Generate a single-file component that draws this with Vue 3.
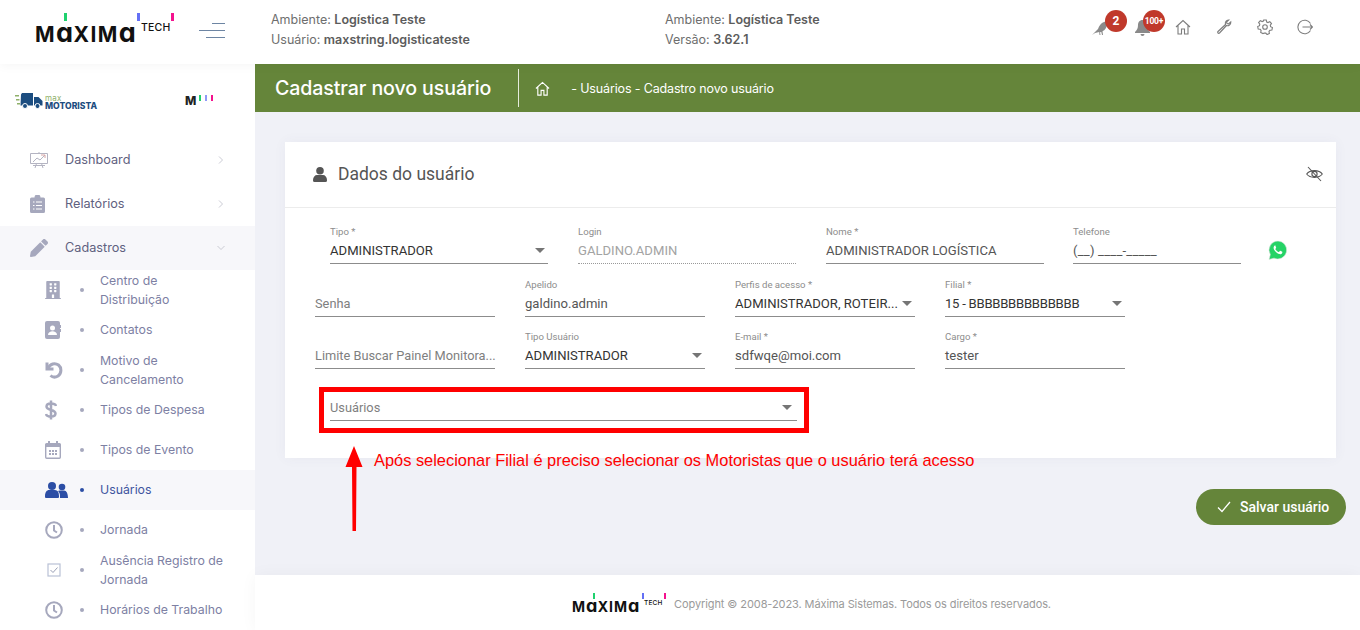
<script setup>
const main = [
  { label: 'Dashboard', icon: 'chart', chev: 'right' },
  { label: 'Relatórios', icon: 'clipboard', chev: 'right' },
  { label: 'Cadastros', icon: 'pencil', chev: 'down', open: true },
]
const subs = [
  { label: 'Centro de Distribuição', icon: 'building' },
  { label: 'Contatos', icon: 'contact' },
  { label: 'Motivo de Cancelamento', icon: 'undo' },
  { label: 'Tipos de Despesa', icon: 'dollar' },
  { label: 'Tipos de Evento', icon: 'calendar' },
  { label: 'Usuários', icon: 'users', active: true },
  { label: 'Jornada', icon: 'clock' },
  { label: 'Ausência Registro de Jornada', icon: 'check' },
  { label: 'Horários de Trabalho', icon: 'clock' },
]
const rows = [
  { cls: 'row-a', fields: [
    { label: 'Tipo *', value: 'ADMINISTRADOR', select: true },
    { label: 'Login', value: 'GALDINO.ADMIN', disabled: true },
    { label: 'Nome *', value: 'ADMINISTRADOR LOGÍSTICA', soft: true },
    { label: 'Telefone', value: '(__) ____-_____', soft: true, cls: 'phone' },
  ] },
  { cls: 'row-b', fields: [
    { value: 'Senha', empty: true },
    { label: 'Apelido', value: 'galdino.admin', soft: true },
    { label: 'Perfis de acesso *', value: 'ADMINISTRADOR, ROTEIR...', select: true },
    { label: 'Filial *', value: '15 - BBBBBBBBBBBBBB', select: true, cls: 'tight' },
  ] },
  { cls: 'row-b', fields: [
    { value: 'Limite Buscar Painel Monitora...', empty: true },
    { label: 'Tipo Usuário', value: 'ADMINISTRADOR', select: true },
    { label: 'E-mail *', value: 'sdfwqe@moi.com', soft: true },
    { label: 'Cargo *', value: 'tester', soft: true },
  ] },
  { cls: 'row-c', fields: [
    { value: 'Usuários', empty: true, select: true },
  ] },
]
</script>

<template>
  <div class="page">
    <header class="header">
      <div class="brand">
        <div class="logo">
          <span class="mark">M<i>a</i>XIM<i>a</i></span><span class="tech">TECH</span>
          <b class="tick green"></b><b class="tick blue"></b><b class="tick pink"></b>
        </div>
        <svg class="burger" width="26" height="15" viewBox="0 0 26 15">
          <path d="M13 .5H26M0 7.500H26M7 14.500H26" stroke="#6d85a3" stroke-width="1" fill="none" />
        </svg>
      </div>
      <div class="info">
        <p>Ambiente: <strong>Logística Teste</strong></p>
        <p>Usuário: <strong>maxstring.logisticateste</strong></p>
      </div>
      <div class="info second">
        <p>Ambiente: <strong>Logística Teste</strong></p>
        <p>Versão: <strong>3.62.1</strong></p>
      </div>
      <div class="tools">
        <span class="tool bird">
          <svg width="17" height="16" viewBox="0 0 17 16">
            <path d="M0 15 6 9c1-3 3-6 6-7 1-.6 2.500-.5 3 .5L17 4l-2 .8c-.5 3-2 5.500-4.500 6.500L11 15h-1l-.7-3-1.300.2L8.500 15h-1l-.3-3L3 13Z" fill="#8a8a8a" />
          </svg>
          <em class="badge">2</em>
        </span>
        <span class="tool bell">
          <svg width="15" height="16" viewBox="0 0 15 16">
            <path d="M7.500 0C4.500 0 3 2.500 3 5c0 3.500-1 5-3 7v1h15v-1c-2-2-3-3.500-3-7 0-2.500-1.500-5-4.500-5ZM5.500 14a2 2 0 0 0 4 0Z" fill="#8a8a8a" />
          </svg>
          <em class="badge small">100+</em>
        </span>
        <svg class="tool-icon" width="16" height="16" viewBox="0 0 16 16" fill="none" stroke="#7d7d7d" stroke-width="1.1">
          <path d="M1 8 8 1.500 15 8M3 6.500V15h3.500v-5h3v5H13V6.500" />
        </svg>
        <svg class="tool-icon" width="16" height="16" viewBox="0 0 16 16" fill="none" stroke="#7d7d7d" stroke-width="1.1">
          <path d="M9.500 5.500 2 12.500c-1 1 .5 2.500 1.500 1.500l7-7.500c2 .7 4.500-1 4.300-3.500L12.500 5 11 4.500l-.5-1.500L12.800 1c-2.500-.3-4 2.300-3.300 4.500Z" />
        </svg>
        <svg class="tool-icon" width="16" height="16" viewBox="0 0 16 16" fill="none" stroke="#7d7d7d" stroke-width="1.1">
          <circle cx="8" cy="8" r="2.300" />
          <path d="M6.700 1h2.600l.4 2 1.300.6 1.800-1 1.700 2-1.200 1.600.3 1.500 1.800.9-.5 2.500-2 .2-.9 1.200.4 2-2.300 1.100-1.300-1.500H7.400L6 14.600l-2.300-1.100.4-2-.9-1.200-2-.2L.7 7.600l1.800-.9.300-1.500L1.600 3.600l1.700-2 1.800 1 1.300-.6Z" />
        </svg>
        <svg class="tool-icon last" width="16" height="16" viewBox="0 0 16 16" fill="none" stroke="#7d7d7d" stroke-width="1.1">
          <path d="M13.500 4.500A6.800 6.800 0 1 0 13.500 11.500M5.500 8H15.500M13 5.500 15.500 8 13 10.500" />
        </svg>
      </div>
    </header>

    <div class="body">
      <aside class="sidebar">
        <div class="products">
          <div class="maxmot">
            <svg width="28" height="16" viewBox="0 0 28 16">
              <path d="M0 2h4v1.500H0zM1 6h3.500v1.500H1zM2 10h3v1.500H2z" fill="#8fb06a" />
              <path d="M6 1.500 7 0h11v12.500H5.500ZM19 4h4.500l4 4v4.500H19Z" fill="#1c4d80" />
              <circle cx="10" cy="13" r="2.500" fill="#1c4d80" stroke="#fff" />
              <circle cx="22.500" cy="13" r="2.500" fill="#1c4d80" stroke="#fff" />
            </svg>
            <div class="maxmot-text"><span>max</span><strong>MOTORISTA</strong></div>
          </div>
          <div class="mini">
            <span>M</span><b class="bar green"></b><b class="bar blue"></b><b class="bar pink"></b>
          </div>
        </div>

        <nav>
          <a v-for="m in main" :key="m.label" class="main-item" :class="{ open: m.open }">
            <span class="main-icon">
              <svg v-if="m.icon === 'chart'" width="18" height="17" viewBox="0 0 18 17" fill="none" stroke="#b4b4c2" stroke-width="1">
                <path d="M.5 1.500h17v10H.5ZM3 10l4-4 3 2 5-5M5 16l1.500-4.500M13 16l-1.500-4.500M9 0v1.500M3 13.500h12" />
                <path d="M11 3h4v3" stroke="#d8a6a6" />
              </svg>
              <svg v-else-if="m.icon === 'clipboard'" width="15" height="18" viewBox="0 0 15 18">
                <path d="M1.500 2.500H4.500a3 3 0 0 1 6 0h3A1.500 1.500 0 0 1 15 4v12.500a1.500 1.500 0 0 1-1.500 1.500H1.500A1.500 1.500 0 0 1 0 16.500V4a1.500 1.500 0 0 1 1.500-1.500Z" fill="#a6a8bd" />
                <path d="M3 7h1.500M6 7h6M3 10.500h1.500M6 10.500h6M3 14h1.500M6 14h6" stroke="#fff" stroke-width="1.200" />
              </svg>
              <svg v-else width="18" height="18" viewBox="0 0 512 512">
                <path d="M497.900 142.100l-46.100 46.100c-4.700 4.700-12.300 4.700-17 0l-111-111c-4.700-4.700-4.700-12.300 0-17l46.100-46.100c18.700-18.700 49.100-18.700 67.900 0l60.100 60.100c18.800 18.700 18.800 49.100 0 67.900zM284.200 99.800L21.600 362.400.4 483.900c-2.900 16.400 11.400 30.600 27.800 27.800l121.500-21.300 262.600-262.600c4.700-4.700 4.700-12.300 0-17l-111-111c-4.800-4.700-12.400-4.700-17.100 0z" fill="#a6a8bd" />
              </svg>
            </span>
            <span class="main-label">{{ m.label }}</span>
            <svg class="chev" width="8" height="8" viewBox="0 0 8 8" fill="none" stroke="#c4c5cf" stroke-width=".9">
              <path v-if="m.chev === 'right'" d="M2 .5 5.500 4 2 7.500" />
              <path v-else d="M.5 2 4 5.500 7.500 2" />
            </svg>
          </a>
          <a v-for="s in subs" :key="s.label" class="sub-item" :class="{ active: s.active }">
            <span class="sub-icon">
              <svg v-if="s.icon === 'building'" width="16" height="18" viewBox="0 0 448 512">
                <path d="M436 480h-20V24c0-13.255-10.745-24-24-24H56C42.745 0 32 10.745 32 24v456H12c-6.627 0-12 5.373-12 12v20h448v-20c0-6.627-5.373-12-12-12zM128 76c0-6.627 5.373-12 12-12h40c6.627 0 12 5.373 12 12v40c0 6.627-5.373 12-12 12h-40c-6.627 0-12-5.373-12-12V76zm0 96c0-6.627 5.373-12 12-12h40c6.627 0 12 5.373 12 12v40c0 6.627-5.373 12-12 12h-40c-6.627 0-12-5.373-12-12v-40zm52 148h-40c-6.627 0-12-5.373-12-12v-40c0-6.627 5.373-12 12-12h40c6.627 0 12 5.373 12 12v40c0 6.627-5.373 12-12 12zm76 160h-64v-84c0-6.627 5.373-12 12-12h40c6.627 0 12 5.373 12 12v84zm64-172c0 6.627-5.373 12-12 12h-40c-6.627 0-12-5.373-12-12v-40c0-6.627 5.373-12 12-12h40c6.627 0 12 5.373 12 12v40zm0-96c0 6.627-5.373 12-12 12h-40c-6.627 0-12-5.373-12-12v-40c0-6.627 5.373-12 12-12h40c6.627 0 12 5.373 12 12v40zm0-96c0 6.627-5.373 12-12 12h-40c-6.627 0-12-5.373-12-12V76c0-6.627 5.373-12 12-12h40c6.627 0 12 5.373 12 12v40z" fill="#a6a8bd" />
              </svg>
              <svg v-else-if="s.icon === 'contact'" width="16" height="18" viewBox="0 0 16 18">
                <rect width="15" height="18" rx="2" fill="#a6a8bd" />
                <path d="M15 4h1v3h-1zM15 8h1v3h-1z" fill="#a6a8bd" />
                <circle cx="7.500" cy="7" r="2.500" fill="#fff" />
                <path d="M3 14c0-5 9-5 9 0Z" fill="#fff" />
              </svg>
              <svg v-else-if="s.icon === 'undo'" width="18" height="18" viewBox="0 0 18 18" fill="none" stroke="#a6a8bd" stroke-width="3">
                <path d="M2 1.500V8h6.500" />
                <path d="M3 7.500C5 2.500 10 1.500 13.500 4c3.500 3 3 8.500-.5 11-2.500 1.500-5.500 1.300-7.500-.5" />
              </svg>
              <svg v-else-if="s.icon === 'dollar'" width="12" height="20" viewBox="0 0 12 20" fill="none" stroke="#a6a8bd" stroke-width="2.500">
                <path d="M11 6C10.500 4 8.500 3.500 6 3.500 3.500 3.500 1.500 4.500 1.500 6.500S3.500 9.300 6 10s4.500 1.500 4.500 3.500S8.500 16.500 6 16.500 1.500 16 1 14M6 .5v19" />
              </svg>
              <svg v-else-if="s.icon === 'calendar'" width="16" height="18" viewBox="0 0 16 18">
                <path d="M3 0h2v2h6V0h2v2h1.500A1.500 1.500 0 0 1 16 3.500V6H0V3.500A1.500 1.500 0 0 1 1.500 2H3Z" fill="#a6a8bd" />
                <path d="M.7 6v10.300a1 1 0 0 0 1 1h12.600a1 1 0 0 0 1-1V6" fill="none" stroke="#a6a8bd" stroke-width="1.400" />
                <path d="M4 9h2v2H4zM7 9h2v2H7zM10 9h2v2h-2zM4 12h2v2H4zM7 12h2v2H7zM10 12h2v2h-2z" fill="#a6a8bd" />
              </svg>
              <svg v-else-if="s.icon === 'users'" width="23" height="16" viewBox="0 0 23 16">
                <circle cx="7" cy="4" r="4" fill="#2c4ea5" />
                <path d="M0 14c0-4 2-6 4-6h6c2.500 0 4 2 4 6v1a1 1 0 0 1-1 1H1a1 1 0 0 1-1-1Z" fill="#2c4ea5" />
                <circle cx="17" cy="5" r="3.300" fill="#2c4ea5" />
                <path d="M15 16v-2c0-2-.7-4-2-5 1-.5 2-.5 3-.5h3c2.500 0 4 3 4 7.500Z" fill="#2c4ea5" />
              </svg>
              <svg v-else-if="s.icon === 'clock'" width="18" height="18" viewBox="0 0 18 18" fill="none" stroke="#a6a8bd">
                <circle cx="9" cy="9" r="7.800" stroke-width="2" />
                <path d="M9 4v5.500l3 2" stroke-width="2" />
              </svg>
              <svg v-else class="check-icon" width="14" height="14" viewBox="0 0 14 14" fill="none">
                <rect x="1" y="1" width="12" height="12" stroke="#b9c1d6" stroke-width="1.200" />
                <path d="M3.500 7 6 9.500l4.500-5" stroke="#9aa0b6" stroke-width="1" />
              </svg>
            </span>
            <span class="dot"></span>
            <span class="sub-label">{{ s.label }}</span>
          </a>
        </nav>
      </aside>

      <div class="main">
        <div class="titlebar">
          <h1>Cadastrar novo usuário</h1>
          <span class="sep"></span>
          <svg class="crumb-home" width="15" height="15" viewBox="0 0 16 16" fill="none" stroke="#fff" stroke-width="1.200">
            <path d="M1 8 8 1.500 15 8M3 6.500V15h3.500v-5h3v5H13V6.500" />
          </svg>
          <span class="crumb">- Usuários - Cadastro novo usuário</span>
        </div>

        <div class="content">
          <section class="card">
            <div class="card-head">
              <svg width="14" height="15" viewBox="0 0 14 15">
                <circle cx="7" cy="3.800" r="3.800" fill="#555" />
                <path d="M0 13c0-3 2-5 4-5h6c2 0 4 2 4 5v.5A1.500 1.500 0 0 1 12.500 15h-11A1.500 1.500 0 0 1 0 13.500Z" fill="#555" />
              </svg>
              <h2>Dados do usuário</h2>
              <svg class="eye" width="17" height="16" viewBox="0 0 17 16" fill="none" stroke="#555" stroke-width="1.100">
                <path d="M.7 8C4 3.500 13 3.500 16.300 8 13 12.500 4 12.500.7 8Z" />
                <circle cx="8.500" cy="8" r="2.600" />
                <path d="M2 1l13 14" />
              </svg>
            </div>
            <div class="form">
              <div v-for="(r, i) in rows" :key="i" class="row" :class="r.cls">
                <div
                  v-for="f in r.fields"
                  :key="f.value"
                  class="field"
                  :class="[f.cls, { select: f.select, disabled: f.disabled, soft: f.soft, empty: f.empty }]"
                >
                  <label>{{ f.label }}</label>
                  <div class="value">{{ f.value }}</div>
                </div>
                <svg v-if="i === 0" class="whats" width="20" height="20" viewBox="0 0 20 20">
                  <path d="M10 1a9 9 0 0 0-7.700 13.600L1 19.500l5-1.300A9 9 0 1 0 10 1Z" fill="#25d366" stroke="#e6e6e6" stroke-width=".6" />
                  <path d="M7.200 5.500c-.4 0-1 .2-1.300.9-.5 1-.5 2.500.9 4.400 1.500 2 3 3 4.700 3.300 1.300.2 2.300-.4 2.700-1.200.2-.5.200-1 .1-1.100l-2-1c-.2-.1-.4 0-.5.100l-.8 1c-.2.200-.3.200-.5.100-1.300-.5-2.500-1.600-3.100-2.700-.1-.2-.1-.3.100-.5l.6-.8c.1-.2.100-.3 0-.5l-.8-2c-.1-.3-.3-.4-.5-.4Z" fill="#fff" />
                </svg>
              </div>
            </div>
          </section>
          <button class="save" type="button">
            <svg width="14" height="12" viewBox="0 0 14 12" fill="none" stroke="#fff" stroke-width="1.300"><path d="M1 6.500 5 10.500 13 1" /></svg>
            Salvar usuário
          </button>
        </div>

        <footer class="footer">
          <div class="logo foot">
            <span class="mark">M<i>a</i>XIM<i>a</i></span><span class="tech">TECH</span>
            <b class="tick green"></b><b class="tick blue"></b><b class="tick pink"></b>
          </div>
          <span class="copy">Copyright © 2008-2023. Máxima Sistemas. Todos os direitos reservados.</span>
        </footer>
      </div>
    </div>

    <div class="note-box"></div>
    <svg class="note-arrow" width="20" height="86" viewBox="0 0 20 86">
      <path d="M10 0 18.500 21H12.500L12 85H8.500L8 21H1.500Z" fill="#ff0000" />
    </svg>
    <p class="note-text">Após selecionar Filial é preciso selecionar os Motoristas que o usuário terá acesso</p>
  </div>
</template>

<style>
html, body { margin: 0; background: #fff; }
</style>

<style scoped>
* { box-sizing: border-box; }
.page {
  position: relative;
  width: 1360px;
  height: 630px;
  overflow: hidden;
  display: flex;
  flex-direction: column;
  font-family: Inter, "Liberation Sans", sans-serif;
  background: #fff;
}
.header {
  position: relative;
  z-index: 2;
  height: 64px;
  flex: none;
  display: flex;
  align-items: center;
  background: #fff;
  box-shadow: 0 2px 10px rgba(0, 0, 0, .04);
}
.brand {
  width: 271px;
  flex: none;
  display: flex;
  align-items: center;
  padding-left: 35px;
}
.logo { position: relative; display: flex; color: #111; width: 139px; height: 26px; margin-top: 5px; }
.mark {
  font: 700 21px/21px Inter, sans-serif;
  letter-spacing: 1.400px;
  white-space: nowrap;
  color: #111;
  font-feature-settings: "cv11";
}
.mark i { font-style: normal; font-size: 27px; line-height: 21px; letter-spacing: .5px; }
.tech {
  font: 500 10.500px/12px Inter, sans-serif;
  letter-spacing: .2px;
  position: absolute;
  left: 106px;
  top: 0;
}
.tick { position: absolute; top: -9px; width: 3px; height: 8px; }
.tick.green { left: 29px; background: #1fd16e; }
.tick.blue { left: 102px; background: #6470f5; }
.tick.pink { left: 136px; background: #f4128e; }
.burger { margin-left: 25px; margin-top: -4px; }
.info { width: 394px; flex: none; color: #6e6e6e; font-size: 12.500px; line-height: 20px; margin-top: -5px; }
.info p { margin: 0; }
.info strong { font-weight: 600; color: #5c5c5c; }
.info.second { width: 420px; }
.tools { display: flex; align-items: center; margin-left: 7px; height: 32px; margin-top: -11px; }
.tool { position: relative; display: flex; margin-top: 3px; }
.tool.bird { margin-right: 26px; }
.tool.bell { margin-right: 25px; }
.tool-icon { margin-right: 25px; flex: none; }
.tool-icon.last { margin-right: 0; margin-left: -1px; }
.badge {
  position: absolute;
  font: 700 12px/22px Roboto, sans-serif;
  color: #fff;
  text-align: center;
  width: 22px;
  height: 22px;
  border-radius: 50%;
  background: #c0392b;
  top: -10px;
  left: 13px;
}
.badge.small { font-size: 8.500px; left: 8px; letter-spacing: -.2px; }

.body { flex: 1; display: flex; min-height: 0; }
.sidebar { width: 255px; flex: none; background: #fff; overflow: hidden; }
.products { height: 74px; display: flex; align-items: center; padding-left: 15px; }
.maxmot { display: flex; align-items: center; gap: 2px; width: 170px; }
.maxmot-text { display: flex; flex-direction: column; line-height: 1; margin-top: 3px; }
.maxmot-text span { font-size: 8px; line-height: 7px; color: #8fb06a; letter-spacing: .2px; }
.maxmot-text strong { font-size: 8.600px; line-height: 9px; font-weight: 800; color: #1c4d80; }
.mini { display: flex; align-items: flex-start; gap: 2px; font: 800 12px/12px Inter, sans-serif; color: #222; }
.mini span { margin-right: 1px; }
.bar { width: 2px; height: 6px; margin-right: 2px; }
.bar.green { background: #1fd16e; }
.bar.blue { background: #8f99f7; }
.bar.pink { background: #f4128e; }

.main-item { display: flex; align-items: center; height: 44px; padding-left: 30px; position: relative; }
.main-item.open { background: #f7f7fa; }
.main-icon { width: 35px; display: flex; }
.main-label { font-size: 12.700px; color: #5f6180; margin-top: -2px; }
.chev { position: absolute; left: 217px; top: 18px; }
.sub-item { display: flex; align-items: center; height: 40px; padding-left: 45px; }
.sub-item.active { background: #f7f7fa; }
.sub-icon { width: 35px; flex: none; display: flex; align-items: center; }
.check-icon { margin-left: 2px; }
.dot { width: 4px; height: 4px; border-radius: 50%; background: #a6a8bd; flex: none; margin-right: 16px; }
.sub-label { font-size: 12.300px; line-height: 19px; color: #7d80a3; width: 127px; margin-top: -1px; }
.sub-item.active .dot { background: #2c4ea5; }
.sub-item.active .sub-label { color: #3f559f; }

.main { flex: 1; display: flex; flex-direction: column; min-width: 0; }
.titlebar { height: 48px; flex: none; background: #65853a; display: flex; align-items: center; padding-left: 20px; color: #fff; }
.titlebar h1 { margin: 0; font-size: 19.600px; font-weight: 500; letter-spacing: -.1px; white-space: nowrap; }
.sep { width: 1px; height: 38px; background: #e6ecdc; margin-left: 27px; margin-right: 16px; }
.crumb-home { margin-right: 21px; }
.crumb { font-size: 12.500px; letter-spacing: -.15px; }
.content { flex: 1; background: #f0f1f7; padding: 30px 14px 0 30px; display: flex; flex-direction: column; align-items: flex-end; min-height: 0; }
.card { width: 1051px; margin-right: 10px; background: #fff; box-shadow: 0 0 12px rgba(80, 80, 120, .05); }
.card-head { height: 66px; display: flex; align-items: center; gap: 11px; padding-left: 28px; border-bottom: 1px solid #ececec; position: relative; }
.card-head h2 { margin: -2px 0 0; font: 400 17.500px Roboto, sans-serif; color: #555; }
.eye { position: absolute; left: 1021px; top: 24px; }
.form { padding: 16px 0 37px 30px; display: flex; flex-direction: column; gap: 12px; font-family: Roboto, sans-serif; }
.row { display: flex; gap: 30px; height: 40px; position: relative; }
.row-a { padding-left: 15px; margin-bottom: 1px; }
.row-a .field { width: 218px; }
.row-a .field.phone { width: 168px; margin-left: -1px; }
.row-a .field.phone .value { letter-spacing: .2px; }
.row-b .field { width: 180px; }
.row-c { padding-left: 15px; }
.row-c .field { width: 467px; }
.field { position: relative; height: 40px; border-bottom: 1px solid #8c8c8c; }
.field label { display: block; font-size: 9.600px; line-height: 12px; height: 12px; margin-top: 2px; color: #8d8d8d; }
.value { font-size: 13.100px; line-height: 22px; margin-top: 2px; color: #333; white-space: nowrap; }
.field.tight .value { letter-spacing: -.25px; }
.field.soft .value { color: #555; }
.field.empty .value { color: #7f7f7f; font-size: 12.800px; }
.field.disabled { border-bottom: 1px dotted #999; }
.field.disabled .value { color: #a3a3a3; }
.field.select::after {
  content: "";
  position: absolute;
  right: 3px;
  top: 24px;
  width: 0;
  height: 0;
  border-left: 5.500px solid transparent;
  border-right: 5.500px solid transparent;
  border-top: 5.500px solid #757575;
}
.row-c .field.select::after { right: 5px; }
.whats { margin-left: -3px; margin-top: 16px; flex: none; }
.save {
  margin-top: 31px;
  width: 150px;
  height: 36px;
  border: 0;
  border-radius: 18px;
  background: #65853a;
  color: #fff;
  font: 500 14px Roboto, sans-serif;
  display: flex;
  align-items: center;
  gap: 9px;
  padding: 0 0 0 21px;
}
.footer { height: 55px; flex: none; background: #fff; display: flex; align-items: center; padding-left: 317px; box-shadow: 0 0 16px rgba(0, 0, 0, .04); position: relative; }
.logo.foot { width: 102px; height: 14px; margin-top: 6px; }
.logo.foot .mark { font-size: 14px; line-height: 13px; letter-spacing: 1px; }
.logo.foot .mark i { font-size: 18px; line-height: 13px; letter-spacing: .3px; }
.logo.foot .tech { font-size: 6.500px; line-height: 8px; left: 72px; top: 0; }
.logo.foot .tick { top: -6px; width: 2px; height: 6px; }
.logo.foot .tick.green { left: 21px; }
.logo.foot .tick.blue { left: 70px; }
.logo.foot .tick.pink { left: 92px; }
.copy { font-size: 11px; color: #9a9a9a; letter-spacing: -.09px; white-space: nowrap; margin-top: 2px; }

.note-box { position: absolute; left: 319px; top: 387px; width: 490px; height: 46px; border: 5px solid #ff0000; }
.note-arrow { position: absolute; left: 344px; top: 446px; }
.note-text { position: absolute; left: 374px; top: 451px; margin: 0; font: 16.400px/18px "Liberation Sans", sans-serif; color: #ff0000; white-space: nowrap; }
</style>
